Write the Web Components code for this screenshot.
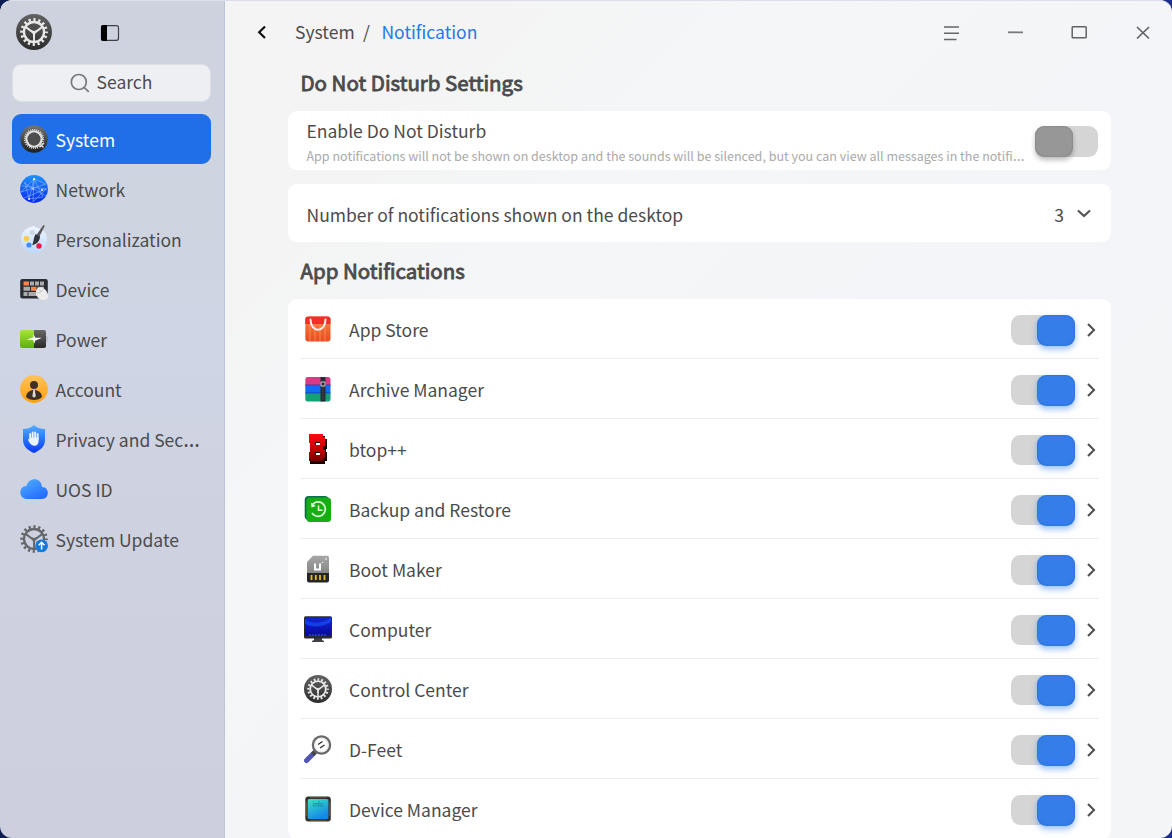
<!DOCTYPE html>
<html lang="en">
<head>
<meta charset="utf-8">
<title>Control Center</title>
<style>
html,body{margin:0;height:100%;overflow:hidden;background:linear-gradient(90deg,#0b1c50,#1c2f8c)}
body{font-family:"Noto Sans CJK SC","Noto Sans",sans-serif;font-size:17.5px;color:#4b4b4c}
</style>
</head>
<body>
<control-center></control-center>
<script>
const gear = (c, s = 1) => `<g fill="none" stroke="${c}" transform="translate(14 14) scale(${s})">
<circle r="7.8" stroke-width="1.8"/><circle r="9.6" stroke-width="2.4" stroke-dasharray="1.75 2.02" stroke-dashoffset=".8"/>
<g stroke-width="1.5"><path d="M0 1V8M0 1L-6.3-3.8M0 1L6.3-3.8"/></g><path d="M-3-1.800L0-.8 3-1.800.9 1.300.7 4H-.7L-.9 1.300z" fill="${c}" stroke="none"/></g>`;
const ICONS = {
control: `<defs><linearGradient id="g" x2="0" y2="1"><stop stop-color="#626262"/><stop offset="1" stop-color="#2d2d2d"/></linearGradient></defs><circle cx="14" cy="14" r="14" fill="url(#g)"/>${gear('#e8e8e8')}`,
system: `<defs><linearGradient id="g" x2="0" y2="1"><stop stop-color="#757575"/><stop offset="1" stop-color="#202020"/></linearGradient></defs><circle cx="14" cy="14" r="13.8" fill="url(#g)"/><g fill="none" stroke="#dedede"><circle cx="14" cy="14" r="7.6" stroke-width="2.4"/><circle cx="14" cy="14" r="9.3" stroke-width="1.6" stroke-dasharray="1 1.085"/><path d="M20 22l4-4M20.5 19.5l3 3" stroke-width="1.3"/></g><circle cx="14" cy="14" r="6.4" fill="#4d4d4d"/>`,
network: `<defs><linearGradient id="g" x2="0" y2="1"><stop stop-color="#2094ff"/><stop offset="1" stop-color="#0526f5"/></linearGradient></defs><circle cx="14" cy="14" r="13.9" fill="url(#g)"/><g fill="none" stroke="#a9cdff" stroke-width=".6" opacity=".8"><path d="M14 4L1 17M14 4l-1 23M14 4L9 24M14 4l9 18M14 4L26 9M4 8l22 13M2 11l25 3M1 17L26 9M4 23l22-9M13 27l13-13M5 7L9 24M9 24l14-2"/></g><g fill="#fff"><circle cx="14" cy="4" r="1"/><circle cx="9" cy="24" r=".9"/><circle cx="13" cy="14" r=".8"/><circle cx="22" cy="15" r=".9"/></g>`,
personal: `<defs><linearGradient id="g" x2="0" y2="1"><stop stop-color="#eef5ff"/><stop offset="1" stop-color="#bdd9fb"/></linearGradient></defs><path fill="url(#g)" fill-rule="evenodd" d="M12 1.5C15 0 15 3 18 3c5 1 9 5 9 11 0 8-5 14-13 14S1 22 1 14C1 8 5 3 12 1.500zM12.300 5a2.500 2.500 0 1 0 .1 5 2.500 2.500 0 0 0-.1-5z"/><circle cx="6.500" cy="13.500" r="2.700" fill="#f9c950"/><circle cx="9" cy="20" r="2.600" fill="#438bf6"/><circle cx="19" cy="21" r="2.700" fill="#ed1745"/><path d="M23.500.3l.9.600-5 10-2.200-1.400z" fill="#555" stroke="#555" stroke-width=".6"/><path d="M15.700 9l4.300 2.300c-.2 5-3 8.200-7.800 8.700 1.900-4.200 1.100-7.200 3.500-11z" fill="#30343a"/>`,
device: `<rect x=".2" y="4" width="27.600" height="19.500" rx="2.200" fill="#292c32"/><g fill="#aaa"><path fill="#ff834c" d="M3.500 6.500h5.500v4H3.500zM11 11.800h5.500v4H11z"/><path d="M10 6.500h4v4h-4zM15 6.500h4v4h-4zM20 6.500h4v4h-4zM3.500 11.800H10v4H3.500zM17.500 11.800H24v4h-6.500zM3.500 17h4v4h-4zM8.500 17h9v4h-9z"/></g><path d="M16 16c1-3.500 5-4.800 8-2.500 3 2 5 7 4 9-1.500 3-6 3.300-8.500 1.500-2.400-1.600-4.200-5-3.500-8z" fill="#ececec"/><path d="M16 18c4 0 6.500-1.500 7.500-5M21 17l-1.500-3" fill="none" stroke="#b9b9b9" stroke-width=".6"/>`,
power: `<defs><linearGradient id="g" x2="0" y2="1"><stop stop-color="#a8e43b"/><stop offset="1" stop-color="#5faf0b"/></linearGradient><linearGradient id="h" x2="0" y2="1"><stop stop-color="#686868"/><stop offset="1" stop-color="#292929"/></linearGradient></defs><rect x="25" y="11" width="2.600" height="6" rx="1" fill="#bbbec7"/><path d="M2 5h12v18H2q-2 0-2-2V7q0-2 2-2z" fill="url(#g)"/><path d="M14 5h10q2 0 2 2v14q0 2-2 2H14z" fill="url(#h)"/><path d="M6.500 14.800l7-2.500v-3l2 3.500h6.500l-7 3v3l-2.300-4z" fill="#fff"/>`,
account: `<defs><linearGradient id="g" x2="0" y2="1"><stop stop-color="#ffc35b"/><stop offset="1" stop-color="#ff9f0e"/></linearGradient></defs><circle cx="14" cy="14" r="13.900" fill="url(#g)"/><g fill="#3e3026"><circle cx="14" cy="10" r="4"/><path d="M6 22c.4-4 2.800-6 6.500-7h3c3.700 1 6.100 3 6.500 7-3.500 4-12.500 4-16 0z"/></g><path d="M13.300 15h1.500l1 6.200-1.800 1.500-1.600-1.500z" fill="#ddd"/>`,
privacy: `<defs><linearGradient id="g" x2="0" y2="1"><stop stop-color="#50b0ff"/><stop offset="1" stop-color="#0638fa"/></linearGradient></defs><path fill="url(#g)" d="M14 0q4 4 11 4v11c0 7-6 11-11 13C9 26 3 22 3 15V4q7 0 11-4z"/><g stroke="#e8f5ff" stroke-width="1.900" stroke-linecap="round" fill="none"><path d="M10.200 14V9M12.700 13V7.500M15.200 13V7.500M17.700 14V9"/></g><path d="M9.300 12.500h9.300v3.500c0 3-1.600 4.800-4 4.800-2.500 0-4-1.500-5.200-3.200L8 14.800c0-1 1-1 1.800 0z" fill="#e8f5ff"/>`,
cloud: `<defs><linearGradient id="g" x2=".7" y2="1"><stop stop-color="#51b3ff"/><stop offset="1" stop-color="#246bff"/></linearGradient></defs><path fill="url(#g)" d="M6.500 24C-1.500 23.500-1.800 11 6.500 11 8.300 1.800 21.500 1.800 22 12c8 0 7.500 12 0 12z"/>`,
update: `${gear('#65676b', 1.28)}<circle cx="21.600" cy="20.800" r="6.400" fill="#1379dc"/><path d="M21.600 24.500v-7M18.700 20.200l2.900-2.900 2.900 2.900" stroke="#fff" stroke-width="1.500" fill="none"/>`,
store: `<defs><linearGradient id="g" x2="0" y2="1"><stop stop-color="#ff8544"/><stop offset="1" stop-color="#e64b22"/></linearGradient></defs><rect x="1.300" y="1.500" width="25.200" height="25" rx="3" fill="url(#g)"/><path d="M6 9v17M11 9v17M16 9v17M21 9v17" stroke="#ff9656" stroke-width="2" opacity=".4"/><path d="M1.300 9V4.500q0-3 3-3h19q3.200 0 3.200 3V9z" fill="#ee3029"/><path d="M6.500 4.500C6.500 18 21.500 18 21.500 4.500" stroke="#fff1ec" stroke-width="2" fill="none" stroke-linecap="round"/>`,
archive: `<defs><clipPath id="c"><rect x="1.300" y="2" width="25.200" height="24.500" rx="2.500"/></clipPath></defs><g clip-path="url(#c)"><path fill="#d63b86" d="M1 2h26v9H1z"/><path fill="#1569f5" d="M1 10h26v9H1z"/><path fill="#12a275" d="M1 18.500h26V27H1z"/><path d="M1 9h26v1.500H1zM1 17h26v1.500H1z" fill="#153091" opacity=".35"/><path d="M16.500 2h5v25h-5z" fill="#292c36"/><path d="M19 10v17" stroke="#737577" stroke-width=".6" stroke-dasharray="1 1"/><path d="M17 7h4v4h-4z" fill="none" stroke="#ccc" stroke-width="1"/></g>`,
btop: `<defs><linearGradient id="g" x2="0" y2="1"><stop stop-color="#ff0808"/><stop offset=".4" stop-color="#e00000"/><stop offset="1" stop-color="#760000"/></linearGradient></defs><path fill="#130000" fill-rule="evenodd" d="M6 1h15v3h2v10h-1v3h1v9h-2v3H6V19h1v-8H6zM12 8v3h5V8zm0 10v3h5v-3z"/><path fill="url(#g)" fill-rule="evenodd" d="M5-1h14v3h2v9h-2v4h2v8h-2v3H5v-9h1V8H5zM11 7v3h5V7zm0 10v3h5v-3z"/>`,
backup: `<rect x=".7" y="1" width="24" height="24" rx="4" fill="#087147"/><rect x="2.500" y="2.500" width="24.500" height="24.500" rx="3.500" fill="#18ad15"/><path d="M8.600 9.500A7.200 7.200 0 1 1 8 18" fill="none" stroke="#d9ffd2" stroke-width="1.700"/><path d="M7 7.500l.5 5 4.300-1.500z" fill="#e6ffe0"/><path d="M14.500 10.500v4.800h4" fill="none" stroke="#e6ffe0" stroke-width="1.500"/>`,
boot: `<defs><linearGradient id="g" x2="0" y2="1"><stop stop-color="#a6a6a6"/><stop offset="1" stop-color="#858585"/></linearGradient></defs><path fill="url(#g)" d="M9 .8h14q2 0 2 2V19H3V7z"/><path fill="#252525" d="M3 18h22v7.500q0 2-2 2H5q-2 0-2-2z"/><path d="M7.500 20v5M11.800 20v5M16 20v5M20.500 20v5" stroke="#e4bb24" stroke-width="1.800"/><path d="M11 8.500v6h5v-6" fill="none" stroke="#fff" stroke-width="2"/><path d="M17.500 7.500h2" stroke="#ddd"/><circle cx="22" cy="4" r="1" fill="#ddd"/>`,
computer: `<defs><linearGradient id="g" x2="0" y2="1"><stop stop-color="#1026d0"/><stop offset="1" stop-color="#0a08a0"/></linearGradient></defs><path d="M10 22h8v3l2 1v1H8v-1l2-1z" fill="#404044"/><rect y="1.300" width="28" height="22.200" rx="1.500" fill="#29292f"/><path d="M1 2.500h26v18H1z" fill="url(#g)"/><path d="M1 4q10 8 26-1v4Q13 15 1 9z" fill="#1459fb" opacity=".6"/><path d="M5 20h18" stroke="#3287d8" stroke-width="1.200" stroke-dasharray="2 1" opacity=".8"/>`,
dfeet: `<path d="M2.500 25.500L10 18" stroke="#5055b5" stroke-width="5" stroke-linecap="round"/><path d="M8.500 19.500L11.500 16.500" stroke="#444" stroke-width="4"/><circle cx="17.500" cy="10" r="8.600" fill="#fff" stroke="#68696a" stroke-width="2.300"/><path d="M14 9.500l4.500-3M16 13l4.500-3" stroke="#333" stroke-width="1.500"/><circle cx="17.500" cy="10" r="6.600" fill="none" stroke="#ddd" stroke-width=".7"/>`,
devices: `<defs><linearGradient id="g" x2=".5" y2="1"><stop stop-color="#35e9c1"/><stop offset="1" stop-color="#1686e9"/></linearGradient></defs><rect x="1.300" y="1.500" width="25.500" height="25" rx="3" fill="#34302d"/><rect x="3.700" y="3.900" width="20.700" height="20.200" rx="1.500" fill="url(#g)"/><path d="M6 2.700h16M6 25.300h16M2.500 7v14M25.600 7v14" stroke="#917338" stroke-width=".5"/><text x="14" y="12" text-anchor="middle" font-size="6" fill="#127c8b">info</text>`
};
const define = (name, html) => customElements.define(name, class extends HTMLElement {
  constructor(){super();this.attachShadow({mode:'open'})}
  connectedCallback(){this.shadowRoot.innerHTML = html(this)}
});
define('app-icon', e => `<style>:host{display:block;width:28px;height:28px;flex:none}svg{display:block;width:100%;height:100%;overflow:visible}</style><svg viewBox="0 0 28 28">${ICONS[e.getAttribute('name')]}</svg>`);
define('more-dots', () => `<style>:host{display:inline;font-family:"Noto Sans",sans-serif;font-size:1.2em;line-height:0}</style>…`);
define('nav-item', e => `<style>:host{display:flex;align-items:center;box-sizing:border-box;height:50px;padding:0 0 0 8px;border-radius:9px;gap:7.500px}
:host([active]){background:#1f6fe9;color:#fff}app-icon{position:relative;top:-.5px}span{flex:1;min-width:0;white-space:nowrap;line-height:28px;height:28px;padding-top:2px}</style><app-icon name="${e.getAttribute('icon')}"></app-icon><span><slot></slot></span>`);
define('search-field', () => `<style>:host{display:flex;align-items:center;justify-content:center;box-sizing:border-box;height:38px;margin-bottom:12px;border-radius:9px;background:#eeeff3;border:1px solid #dcdee6;gap:7px;padding-right:1px}svg{width:20px;height:20px;margin-top:-1px}span{line-height:28px;margin-top:-3px}</style><svg viewBox="0 0 20 20" fill="none" stroke="#77797d" stroke-width="1.700"><circle cx="8.800" cy="9" r="7.500"/><path d="M14 14.300l4.800 4.500"/></svg><span>Search</span>`);
define('side-bar', () => `<style>:host{display:block;box-sizing:border-box;width:225px;padding:14px 13px 0 12px;border-right:1px solid #bec4d8;background:linear-gradient(180deg,#ced2de 0,#ced5e1 28%,#cfd5e5 42%,#ced1df 65%,#cdcfdf 100%)}
header{display:flex;align-items:center;height:37px;padding-left:4px;margin-bottom:13px}.logo{width:36px;height:36px;margin-bottom:1px}.panel{width:20px;height:18px;margin:0 0 0 48px}</style>
<header><app-icon class="logo" name="control"></app-icon><svg class="panel" viewBox="0 0 20 18"><rect x="1.500" y="1.700" width="17" height="14.600" rx="2" fill="none" stroke="#3f4147" stroke-width="1.200"/><path d="M3 1h4v16H3q-2 0-2-2V3q0-2 2-2z"/></svg></header><search-field></search-field><nav><slot></slot></nav>`);
define('toggle-switch', () => `<style>:host{display:flex;box-sizing:border-box;width:64px;height:30.500px;border-radius:9.500px;background:#d5d5d5;flex:none;justify-content:flex-end}
i{width:38px;height:31px;border-radius:9.500px;background:#357de8;box-shadow:inset 0 0 2px #1e68dd,0 3px 6px #327dee80}
:host([off]){justify-content:flex-start;width:63px}:host([off]) i{background:#979797;box-shadow:inset 0 0 2px #777,0 3px 5px #0004}</style><i></i>`);
define('setting-card', () => `<style>:host{display:flex;align-items:center;box-sizing:border-box;border-radius:9px;background:#fff;width:823px}</style><slot></slot>`);
define('app-row', e => `<style>:host{display:flex;align-items:center;box-sizing:border-box;height:60px;margin:0 12px;padding:2px 3px 0 4px;border-bottom:1px solid #ececee}
app-icon{position:relative;top:-.5px}toggle-switch{margin-top:1px}span{flex:1;margin-left:17px;line-height:28px;height:27px}.arrow{width:10px;height:16px;margin-left:11px}</style><app-icon name="${e.getAttribute('icon')}"></app-icon><span><slot></slot></span><toggle-switch></toggle-switch><svg class="arrow" viewBox="0 0 10 16"><path d="M2 2l6 6-6 6" fill="none" stroke="#505050" stroke-width="2.100"/></svg>`);
define('title-bar', () => `<style>:host{display:flex;align-items:center;box-sizing:border-box;height:64px;padding:0 19px 0 31px}svg{display:block;fill:none}.crumbs{display:flex;flex:1;padding-left:27px;white-space:pre;line-height:28px;margin-top:-1px}.slash{margin:0 11.500px 0 8.500px}.here{color:#2676ea}.tools{display:flex;gap:44px;padding-top:1px}</style>
<svg width="12" height="16" viewBox="0 0 12 16"><path d="M9 2.500L3.200 8.200 9 14" stroke="#111" stroke-width="2.200"/></svg><div class="crumbs"><span>System</span><span class="slash">/</span><span class="here">Notification</span></div>
<div class="tools"><svg width="20" height="20"><path d="M3 4h15M3 10.300h15M3 16.500h12.500" stroke="#646568" stroke-width="1.500"/></svg><svg width="20" height="20"><path d="M3 9.300h15" stroke="#77797c" stroke-width="1.800"/></svg><svg width="20" height="20"><rect x="3.200" y="3.700" width="14" height="11" rx=".8" stroke="#626366" stroke-width="1.500"/></svg><svg width="20" height="20"><path d="M4 4l12 11.500m0-11.500l-12 11.500" stroke="#606164" stroke-width="1.700"/></svg></div>`);
define('settings-page', () => `<style>:host{display:block;flex:1;min-width:0;background:linear-gradient(135deg,#f4f4f4 0,#f4f4f4 15%,#f4f6f7 30%,#f4f5f8 55%,#f4f5f7 100%)}
main{padding-left:63px}h2{margin:0 0 0 12.500px;font-size:20.500px;line-height:32px;height:32px;font-weight:400;-webkit-text-stroke:.85px currentColor}.top{padding-top:2px;margin-bottom:13px}.first{height:59px;padding:0 13px 0 18.500px;margin-bottom:14px}.first toggle-switch{margin-top:2px}.copy{flex:1;min-width:0}.title{line-height:25px;margin-top:2px}.hint{font-size:12.530px;line-height:20px;height:20px;margin-top:3px;color:#aaa;white-space:nowrap}.second{height:58px;padding:0 19px 0 18.500px;margin-bottom:12px}.second span{flex:1;padding-top:3px}.second b{font-weight:400;padding-top:3px;margin-right:12px}.second svg{margin-top:2px}.list{display:block;margin-top:13px}</style>
<title-bar></title-bar><main><h2 class="top">Do Not Disturb Settings</h2><setting-card class="first"><div class="copy"><div class="title">Enable Do Not Disturb</div><div class="hint">App notifications will not be shown on desktop and the sounds will be silenced, but you can view all messages in the notifi<more-dots></more-dots></div></div><toggle-switch off></toggle-switch></setting-card><setting-card class="second"><span>Number of notifications shown on the desktop</span><b>3</b><svg width="16" height="14" viewBox="0 0 16 14"><path d="M2 3.500L8 9l6-5.500" fill="none" stroke="#555" stroke-width="2.200"/></svg></setting-card><h2>App Notifications</h2><setting-card class="list"><slot></slot></setting-card></main>`);
define('control-center', () => `<style>:host{display:flex;position:relative;box-sizing:border-box;height:838px;width:1172px;border-radius:12px;overflow:hidden}:host::after{content:"";position:absolute;inset:0;border-radius:12px;box-shadow:inset 0 1px #dcdeeb;pointer-events:none}</style>
<side-bar>${[['system','System'],['network','Network'],['personal','Personalization'],['device','Device'],['power','Power'],['account','Account'],['privacy','Privacy and Sec<more-dots></more-dots>'],['cloud','UOS ID'],['update','System Update']].map((x,i)=>`<nav-item icon="${x[0]}" ${i?'':'active'}>${x[1]}</nav-item>`).join('')}</side-bar>
<settings-page>${[['store','App Store'],['archive','Archive Manager'],['btop','btop++'],['backup','Backup and Restore'],['boot','Boot Maker'],['computer','Computer'],['control','Control Center'],['dfeet','D-Feet'],['devices','Device Manager']].map(x=>`<app-row icon="${x[0]}">${x[1]}</app-row>`).join('')}</settings-page>`);
</script>
</body>
</html>
